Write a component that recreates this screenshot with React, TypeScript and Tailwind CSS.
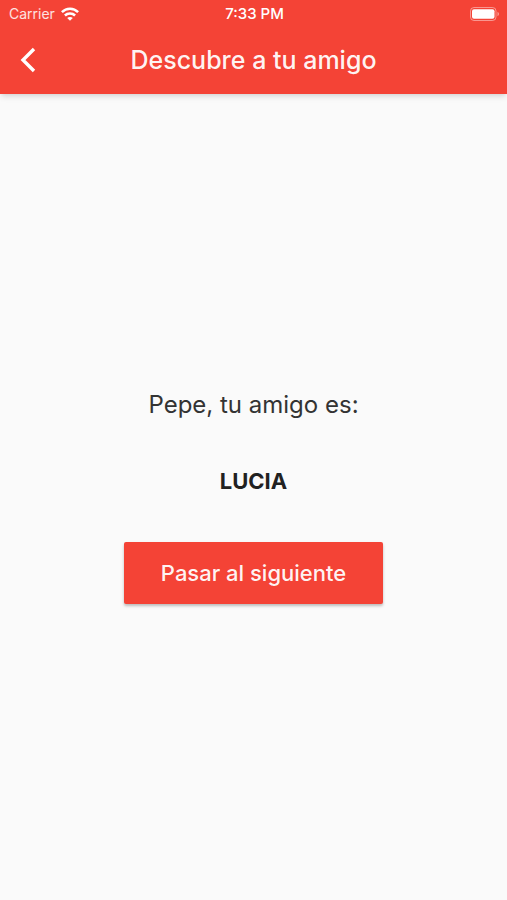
import { useState } from 'react';

const FRIENDS = [
    { name: 'Pepe', friend: 'LUCIA' },
    { name: 'Lucia', friend: 'PEPE' },
];

function WifiIcon() {
    return (
        <svg viewBox="0 0 18 14" className="w-[18px] h-[14px]" fill="none" stroke="currentColor" strokeWidth="2.5" aria-hidden="true">
            <path d="M.9 5.2C5.4.6 12.6.6 17.1 5.2" />
            <path d="M3.9 8.5c2.8-2.8 7.4-2.8 10.2 0" />
            <path d="M9 13.8 6.2 11c1.5-1.5 4.1-1.5 5.6 0Z" fill="currentColor" stroke="none" />
        </svg>
    );
}

function BatteryIcon() {
    return (
        <svg viewBox="0 0 30 14" className="w-[30px] h-[14px]" fill="none" aria-hidden="true">
            <rect x="0.5" y="0.5" width="25.5" height="13" rx="3.5" stroke="currentColor" strokeOpacity="0.45" />
            <rect x="2" y="2.2" width="22.5" height="9.6" rx="2" fill="currentColor" />
            <path d="M27.5 4.8c2 .8 2 3.6 0 4.4Z" fill="currentColor" fillOpacity="0.5" />
        </svg>
    );
}

function StatusBar() {
    return (
        <div className="grid grid-cols-3 items-center h-7 pl-[9px] pr-[7px] text-sm">
            <div className="flex items-center gap-1.5">
                <span className="text-white/85">Carrier</span>
                <WifiIcon />
            </div>
            <span className="text-center text-[15px] font-medium">7:33 PM</span>
            <div className="flex justify-end">
                <BatteryIcon />
            </div>
        </div>
    );
}

export default function App() {
    const [index, setIndex] = useState(0);
    const current = FRIENDS[index];

    return (
        <div className="min-h-screen flex flex-col bg-[#fafafa] text-[#212121] font-['Inter',sans-serif]">
            <header className="relative bg-[#f44336] text-white shadow-md">
                <StatusBar />
                <div className="grid grid-cols-[56px_1fr_56px] items-center h-[66px] pb-0.5">
                    <button type="button" aria-label="Volver" className="flex items-center justify-center h-12">
                        <svg viewBox="0 0 16 26" className="w-4 h-[26px]" fill="none" stroke="currentColor" strokeWidth="3.4" aria-hidden="true">
                            <path d="M14 2 3 13l11 11" />
                        </svg>
                    </button>
                    <h1 className="text-center text-[25px] leading-8 font-medium text-white/95">Descubre a tu amigo</h1>
                </div>
            </header>

            <main className="flex-1 flex flex-col items-center justify-center pb-px">
                <p className="text-2xl leading-8 text-[#333333]">{current.name}, tu amigo es:</p>
                <p className="mt-11 text-[22px] leading-8 font-bold">{current.friend}</p>
                <button
                    type="button"
                    onClick={() => setIndex((index + 1) % FRIENDS.length)}
                    className="mt-[45px] h-[62px] px-[37px] rounded-xs bg-[#f44336] text-white/95 text-[22px] font-medium shadow-[0_2px_3px_rgba(0,0,0,0.25)]">
                    Pasar al siguiente
                </button>
            </main>
        </div>
    );
}
